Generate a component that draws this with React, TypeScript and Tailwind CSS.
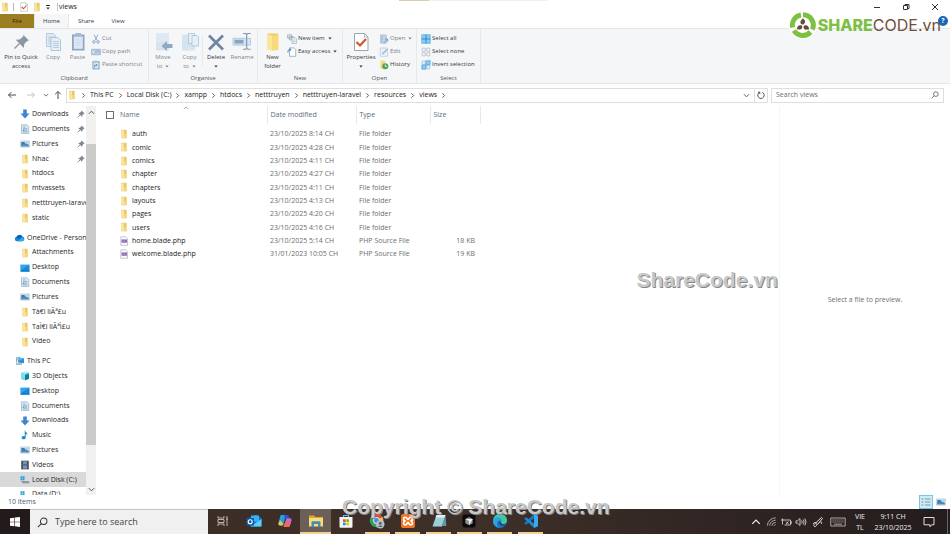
import type { ReactNode } from "react";

/* ---------- small icons ---------- */

type IconProps = { className?: string };

const Folder = ({ className = "h-[10px] w-[10px]" }: IconProps) => (
  <svg viewBox="0 0 10 10" className={className}>
    <path d="M2 .8h5.6v8.4H2z" fill="#e9c767" />
    <path d="M2 1.4l3-.6v8.6l-3-.2z" fill="#f8e3a0" />
    <path d="M5 5h2.9v4.2H5z" fill="#f5d77f" />
  </svg>
);

const BigFolder = () => (
  <svg viewBox="0 0 20 20" className="h-5 w-5">
    <path d="M4.5 1.5h10.5v16H4.5z" fill="#efcb66" />
    <path d="M4.5 2.5l5 1v15.5l-5-2z" fill="#fbe596" />
    <path d="M9.5 4.500l6-2v15l-6 1.500z" fill="#f8da7c" />
  </svg>
);

const Download = () => (
  <svg viewBox="0 0 10 10" className="h-[10px] w-[10px]">
    <path d="M3.2 .5h3.600v4h2.700L5 9.400.500 4.500h2.700z" fill="#3a87d0" />
  </svg>
);

const Doc = () => (
  <svg viewBox="0 0 10 10" className="h-[10px] w-[10px]">
    <path d="M1.500 .8h5.500l1.800 1.800v6.800H1.500z" fill="#dfe9f1" stroke="#8c9dab" strokeWidth=".6" />
    <path d="M3 3h2.600M3 4.700h4.300M5 6.200h2.300M3 7.800h4.300" stroke="#5b9bc4" strokeWidth=".7" />
    <path d="M2.700 5.500h1.800v1.600H2.700z" fill="#53a3d8" />
  </svg>
);

const Picture = () => (
  <svg viewBox="0 0 10 10" className="h-[10px] w-[10px]">
    <path d="M.5 1.900h9v6.300h-9z" fill="#e4eef6" stroke="#a0b4c4" strokeWidth=".5" />
    <path d="M1.100 2.500h7.800v2H1.100z" fill="#a9d4f2" />
    <path d="M1.100 4.300l3-.6 4.800 2v1.900H1.100z" fill="#4c8bb8" />
    <path d="M1.500 3.300h3v1h-3z" fill="#1f5274" />
  </svg>
);

const Desktop = () => (
  <svg viewBox="0 0 10 10" className="h-[10px] w-[10px]">
    <path d="M.6 1.800h8.900v6.700H.6z" fill="#1489d8" />
    <path d="M.6 1.800h8.900L.6 7.500z" fill="#2fa5ee" />
    <path d="M.6 7.600h8.900v1H.6z" fill="#0a6cb0" />
  </svg>
);

const Cloud = () => (
  <svg viewBox="0 0 11 10" className="h-[10px] w-[11px]">
    <path d="M2.900 8.300a2.300 2.300 0 0 1-.4-4.500 3.300 3.300 0 0 1 5.900-.2 2.400 2.400 0 0 1 .2 4.700z" fill="#1584dc" />
    <path d="M2.600 3.800a3.300 3.300 0 0 1 5.800-.3L4 6z" fill="#0b5fae" />
    <path d="M4 8.300l4.400-4a2.200 2.200 0 0 1 .2 4z" fill="#35a9ee" />
  </svg>
);

const Pc = () => (
  <svg viewBox="0 0 11 10" className="h-[10px] w-[11px]">
    <path d="M3.500 1l6.500 1.500v4.700L4 6.500z" fill="#2f8fd2" />
    <path d="M3.500 1l6.500 1.500L4 5z" fill="#62b7e8" />
    <path d="M2 7.300h6v1.400H2zM2 1.500h1v5H2z" fill="#8fa8ba" />
  </svg>
);

const Cube = () => (
  <svg viewBox="0 0 10 10" className="h-[10px] w-[10px]">
    <path d="M1 2l4-1.200L9 2v5.800L5 9.300 1 7.800z" fill="#27b4cd" />
    <path d="M1 2l4 1v6.300L1 7.800z" fill="#7fdde8" />
    <path d="M1 2l4-1.200L9 2 5 3z" fill="#b9f0f4" />
    <path d="M5 4.500L9 3v4.800L5 9.300z" fill="#0d7f9c" />
  </svg>
);

const Music = () => (
  <svg viewBox="0 0 10 10" className="h-[10px] w-[10px]">
    <path d="M5 .6c.4 1.900 3.400 2.300 2 5.400.1-1.600-.7-2.100-1.300-2.300v3.900a2 1.600 0 1 1-1-1.300V.6z" fill="#1f86cc" />
  </svg>
);

const Film = () => (
  <svg viewBox="0 0 10 10" className="h-[10px] w-[10px]">
    <path d="M1.200 .7h7.600v8.600H1.200z" fill="#333d45" />
    <path d="M3 1.200h4v3.400H3zM3 5.300h4v3.500H3z" fill="#6f98b8" />
    <path d="M2 1v8M8 1v8" stroke="#c8d0d6" strokeWidth=".6" strokeDasharray=".8 .8" />
  </svg>
);

const Disk = () => (
  <svg viewBox="0 0 11 10" className="h-[10px] w-[10px]">
    <path d="M.6 .8h2v2h-2zM3 .8h2v2H3zM.6 3.200h2v2h-2zM3 3.200h2v2H3z" fill="#1fa2d8" />
    <path d="M1.500 6.200h7.300l1.500 1v1.600H3z" fill="#a2acb3" />
    <path d="M1.500 6.200L3 7.200h7.300" stroke="#5d6a72" strokeWidth=".6" fill="none" />
  </svg>
);

const Pin = () => (
  <svg viewBox="0 0 8 8" className="h-2 w-2">
    <path d="M4.600 .5l3 3-.9.3-1.400 1.400-.1 1.700L1.200 2.900l1.700-.1 1.400-1.400z" fill="#7b8893" />
    <path d="M3.200 4.800L.7 7.300" stroke="#7b8893" strokeWidth=".9" />
  </svg>
);

const BigPin = () => (
  <svg viewBox="0 0 20 20" className="h-5 w-5">
    <path d="M12.500 3l5.500 5.500-1.800.5-3 3-.3 4-8.200-8.200 4-.4 3.300-3z" fill="#8b98a3" />
    <path d="M8.500 11.500L3.500 16.500" stroke="#8b98a3" strokeWidth="1.500" />
  </svg>
);

const Php = () => (
  <svg viewBox="0 0 10 10" className="h-[10px] w-[10px]">
    <path d="M1.800 .8h4.900l1.800 1.800v6.700H1.800z" fill="#fbfafd" stroke="#a79fb5" strokeWidth=".6" />
    <path d="M2.600 3.500h5.200v3.200H2.600z" fill="#7c55a5" />
    <path d="M3.300 5.800l.8-1.400.8 1.400.8-1.400.8 1.400" stroke="#d8c6ea" strokeWidth=".5" fill="none" />
  </svg>
);

const Pages = () => (
  <svg viewBox="0 0 20 20" className="h-5 w-5">
    <path d="M3.500 1.500h7l2 2v11h-9z" fill="#e0eaf4" stroke="#a9bfd5" strokeWidth=".8" />
    <path d="M5 5h6M5 7h3M5 9h3M5 11h3" stroke="#b5c8db" strokeWidth=".8" />
    <path d="M8 5.500h7l2.500 2.500v10.500H8z" fill="#e6eef7" stroke="#a1b9d1" strokeWidth=".8" />
    <path d="M10 9.500h6M10 11.500h6M10 13.500h6M10 15.500h6" stroke="#a9c0d6" strokeWidth=".8" />
  </svg>
);

const Clipboard = () => (
  <svg viewBox="0 0 20 20" className="h-5 w-5">
    <path d="M4 2.500h12.500v16H4z" fill="#8fa6c2" />
    <path d="M5.800 4.500h9v12.300h-9z" fill="#dce8f5" />
    <path d="M7.500 1h5.500v3.200H7.500z" fill="#a9bacc" />
    <path d="M7 8h6.500M7 10.500h6.500M7 13h6.500" stroke="#c3d5e8" strokeWidth=".8" />
  </svg>
);

const MoveTo = () => (
  <svg viewBox="0 0 20 20" className="h-5 w-5">
    <path d="M3 1.500h13v17H3z" fill="#d6e3f0" />
    <path d="M3 1.500h13v8H3z" fill="#dfe9f4" />
    <path d="M8.500 14l5.500-5v3h5.500v4H14v3z" fill="#91a8c2" />
  </svg>
);

const CopyTo = () => (
  <svg viewBox="0 0 20 20" className="h-5 w-5">
    <path d="M2 2.500h13v16H2z" fill="#d6e3f0" />
    <path d="M8.500 1.500h6v10h-6z" fill="#e6eff8" stroke="#a3bbd3" strokeWidth=".7" />
    <path d="M12 3.500h5l1.500 1.500v9H12z" fill="#e6eff8" stroke="#a3bbd3" strokeWidth=".7" />
  </svg>
);

const DeleteX = () => (
  <svg viewBox="0 0 20 20" className="h-5 w-5">
    <path d="M3 3.500l14 14M17 3.500l-14 14" stroke="#7087a4" strokeWidth="2.800" />
  </svg>
);

const RenameIcon = () => (
  <svg viewBox="0 0 20 20" className="h-5 w-5">
    <path d="M1 6.200h17.500v7H1z" fill="#d5e2f0" stroke="#a9bfd7" strokeWidth=".7" />
    <path d="M2.500 7.800h9v3.800h-9z" fill="#8aa5c4" />
    <path d="M11 1.500h2.500l1.200 1 1.200-1h2.600M11 17.300h2.500l1.200-1 1.200 1h2.600M14.700 2.500v14" stroke="#7e96b3" strokeWidth="1.100" fill="none" />
  </svg>
);

const PropertiesIcon = ({ className = "h-5 w-5" }: IconProps) => (
  <svg viewBox="0 0 20 20" className={className}>
    <path d="M3.500 1.500h10l3.500 3.500v13.500H3.500z" fill="#fff" stroke="#9da5ad" strokeWidth="1" />
    <path d="M13.500 1.500V5H17" fill="none" stroke="#9da5ad" strokeWidth=".8" />
    <path d="M5.500 10l3.500 3.500 6-6.500" fill="none" stroke="#d0562a" strokeWidth="2.200" />
  </svg>
);

const Scissors = () => (
  <svg viewBox="0 0 10 10" className="h-[10px] w-[10px]">
    <path d="M3 .6l3.300 6M7 .6L3.700 6.600" stroke="#8fa3bb" strokeWidth=".9" fill="none" />
    <circle cx="2.900" cy="7.900" r="1.300" fill="none" stroke="#7fa4cf" strokeWidth=".9" />
    <circle cx="7.100" cy="7.900" r="1.300" fill="none" stroke="#7fa4cf" strokeWidth=".9" />
  </svg>
);

const PathIcon = () => (
  <svg viewBox="0 0 10 10" className="h-[10px] w-[10px]">
    <path d="M.5 2.200h9v5.600h-9z" fill="#a9bfd9" stroke="#92abc9" strokeWidth=".5" />
    <path d="M1.500 3.500l1 3 .9-3M4.500 6.500h1M6.500 6.500h1" stroke="#fff" strokeWidth=".7" fill="none" />
  </svg>
);

const ShortcutIcon = () => (
  <svg viewBox="0 0 10 10" className="h-[10px] w-[10px]">
    <path d="M1.400 1.200h7.200v8.200H1.400z" fill="#8ba6c8" />
    <path d="M2.500 2.500h5v5.800h-5z" fill="#e1ebf6" />
    <path d="M3.500 7.500V5.200h2.200M4.800 3.900l1.500 1.300-1.500 1.200" stroke="#5a7fae" strokeWidth=".8" fill="none" />
    <path d="M3.600 .5h2.800v1.500H3.600z" fill="#b7c6d8" />
  </svg>
);

const NewItemIcon = () => (
  <svg viewBox="0 0 10 10" className="h-[10px] w-[10px]">
    <path d="M.6 .8h4v3.200h-4zM2.300 2.600h4v3.200h-4z" fill="#e2edf5" stroke="#79949f" strokeWidth=".6" />
    <path d="M5 3.800h3.200L9.300 5v4.300H5z" fill="#fff" stroke="#7893a8" strokeWidth=".6" />
    <path d="M6 6h2.200M6 7.500h2.200" stroke="#6aa7c8" strokeWidth=".6" />
  </svg>
);

const EasyIcon = () => (
  <svg viewBox="0 0 10 10" className="h-[10px] w-[10px]">
    <path d="M2.500 .9h4.700l1.500 1.500v6.900H2.500z" fill="#fff" stroke="#8a9aa8" strokeWidth=".7" />
    <path d="M1 5.500C.5 3.400 1.700 2.600 3.600 2.600M2.600 1.300L4 2.600 2.600 4" stroke="#2c78b8" strokeWidth=".9" fill="none" />
  </svg>
);

const OpenIcon = () => (
  <svg viewBox="0 0 10 10" className="h-[10px] w-[10px]">
    <path d="M1.500 .9h5.800v8.400H1.500z" fill="#c6d5e5" stroke="#9cb3cc" strokeWidth=".6" />
    <path d="M2.500 2.500h1v1h-1zM2.500 4.600h1v1h-1zM2.500 6.700h1v1h-1z" fill="#6b8fba" />
    <path d="M5 8.700L8.500 5.200M6 5h2.700v2.700" stroke="#7195bf" strokeWidth=".9" fill="none" />
  </svg>
);

const EditIcon = () => (
  <svg viewBox="0 0 10 10" className="h-[10px] w-[10px]">
    <path d="M1.200 1h7.400v8.300H1.200z" fill="#e9f0f8" stroke="#b2c5da" strokeWidth=".6" />
    <path d="M2.800 7.600l.5-1.500L8 1.800l.9.900-4.600 4.400z" fill="#9db6d3" />
  </svg>
);

const HistoryIcon = () => (
  <svg viewBox="0 0 10 10" className="h-[10px] w-[10px]">
    <path d="M1.500 .6h4.600v8.200H1.500z" fill="#f4d77c" />
    <circle cx="6.300" cy="6.300" r="3" fill="#4ba552" />
    <path d="M6.300 4.500v1.900h1.600" stroke="#fff" strokeWidth=".8" fill="none" />
  </svg>
);

const SelectAllIcon = () => (
  <svg viewBox="0 0 10 10" className="h-[10px] w-[10px]">
    <path d="M.7.700h8.600v8.600H.7z" fill="#8acbf3" stroke="#4a9fd8" strokeWidth=".6" />
    <path d="M5 .7v8.600M.7 5h8.600" stroke="#2a86c8" strokeWidth=".9" />
  </svg>
);

const SelectNoneIcon = () => (
  <svg viewBox="0 0 10 10" className="h-[10px] w-[10px]">
    <path d="M1.200 1.200h3v3h-3zM5.800 1.200h3v3h-3zM1.200 5.800h3v3h-3zM5.800 5.800h3v3h-3z" fill="#fff" stroke="#a9b2bb" strokeWidth=".7" />
  </svg>
);

const InvertIcon = () => (
  <svg viewBox="0 0 10 10" className="h-[10px] w-[10px]">
    <path d="M1.200 1.200h3v3h-3zM5.800 5.800h3v3h-3z" fill="#fff" stroke="#7fb0d8" strokeWidth=".7" />
    <path d="M4.900.7h4.300v4.200H4.900zM.8 5h4.200v4.200H.8z" fill="#8acbf3" stroke="#3f98d4" strokeWidth=".6" />
  </svg>
);

const Chevron = ({ d, className = "h-[7px] w-[7px]" }: { d: "up" | "down" | "right"; className?: string }) => (
  <svg viewBox="0 0 8 8" className={className} fill="none" stroke="currentColor" strokeWidth="1">
    <path d={d === "up" ? "M1 5.500l3-3 3 3" : d === "down" ? "M1 2.500l3 3 3-3" : "M2.800 1.500l2.500 2.500-2.500 2.500"} />
  </svg>
);

const Arrow = ({ className = "" }: IconProps) => (
  <svg viewBox="0 0 10 10" className={`h-[10px] w-[10px] ${className}`} fill="none" stroke="currentColor" strokeWidth="1">
    <path d="M9 5H1.500M4.300 2.200L1.500 5l2.800 2.800" />
  </svg>
);

const Caret = () => (
  <svg viewBox="0 0 4 3" className="h-[3px] w-1" fill="currentColor">
    <path d="M.3 .4h3.400L2 2.400z" />
  </svg>
);

const Magnifier = ({ className = "h-2 w-2" }: IconProps) => (
  <svg viewBox="0 0 12 12" className={className} fill="none" stroke="currentColor" strokeWidth="1.100">
    <circle cx="7.300" cy="4.700" r="3.500" />
    <path d="M4.800 7.200L1 11" />
  </svg>
);

/* ---------- ribbon ---------- */

const Big = ({ icon, label, second, caret, dim, width }: { icon: ReactNode; label: string; second?: string; caret?: boolean; dim?: boolean; width: string }) => (
  <button type="button" className={`flex flex-none flex-col items-center ${width} ${dim ? "text-[#82878e]" : "text-[#34383c]"}`}>
    {icon}
    <span className="mt-px leading-[9px] whitespace-nowrap">{label}</span>
    <span className="flex h-2 items-center gap-[3px] leading-2">
      {second}
      {caret && <Caret />}
    </span>
  </button>
);

const Small = ({ icon, label, caret, dim }: { icon: ReactNode; label: string; caret?: boolean; dim?: boolean }) => (
  <button type="button" className={`flex h-[13px] items-center gap-px whitespace-nowrap ${dim ? "text-[#7b8189]" : "text-[#34383c]"}`}>
    {icon}
    <span>{label}</span>
    {caret && <span className="ml-0.5"><Caret /></span>}
  </button>
);

const Group = ({ title, width, children }: { title: string; width: string; children: ReactNode }) => (
  <section aria-label={title} className={`flex flex-none flex-col justify-between border-r border-[#e6e8ea] ${width}`}>
    <div className="flex pt-[3px]">{children}</div>
    <div className="text-center leading-[10px] text-[#50555b]">{title}</div>
  </section>
);

const Ribbon = () => (
  <div className="flex h-[56px] flex-none border-y border-[#e4e6e9] bg-[#f5f6f7] text-[6px]">
    <Group title="Clipboard" width="w-[149px]">
      <Big icon={<BigPin />} label="Pin to Quick" second="access" width="w-[42px]" />
      <Big icon={<Pages />} label="Copy" dim width="w-[22px]" />
      <Big icon={<Clipboard />} label="Paste" dim width="w-[27px]" />
      <div>
        <Small icon={<Scissors />} label="Cut" dim />
        <Small icon={<PathIcon />} label="Copy path" dim />
        <Small icon={<ShortcutIcon />} label="Paste shortcut" dim />
      </div>
    </Group>
    <Group title="Organise" width="w-[109px]">
      <Big icon={<MoveTo />} label="Move" second="to" caret dim width="w-[28px]" />
      <Big icon={<CopyTo />} label="Copy" second="to" caret dim width="w-[25px]" />
      <div className="my-1 border-l border-[#e6e8ea]" />
      <Big icon={<DeleteX />} label="Delete" caret width="w-[26px]" />
      <Big icon={<RenameIcon />} label="Rename" dim width="w-[26px]" />
    </Group>
    <Group title="New" width="w-[85px]">
      <Big icon={<BigFolder />} label="New" second="folder" width="w-[29px]" />
      <div>
        <Small icon={<NewItemIcon />} label="New item" caret />
        <Small icon={<EasyIcon />} label="Easy access" caret />
      </div>
    </Group>
    <Group title="Open" width="w-[74px]">
      <Big icon={<PropertiesIcon />} label="Properties" caret width="w-[36px]" />
      <div>
        <Small icon={<OpenIcon />} label="Open" caret dim />
        <Small icon={<EditIcon />} label="Edit" dim />
        <Small icon={<HistoryIcon />} label="History" />
      </div>
    </Group>
    <Group title="Select" width="w-[64px]">
      <div className="pl-1">
        <Small icon={<SelectAllIcon />} label="Select all" />
        <Small icon={<SelectNoneIcon />} label="Select none" />
        <Small icon={<InvertIcon />} label="Invert selection" />
      </div>
    </Group>
  </div>
);

/* ---------- title bar and tabs ---------- */

const Header = () => (
  <header className="flex-none">
    <div className="flex h-[14px] items-center">
      <Folder />
      <span className="ml-[3px] h-2 border-l border-[#b5b5b5]" />
      <button type="button" aria-label="Properties" className="ml-[5px]"><PropertiesIcon className="h-[10px] w-[10px]" /></button>
      <button type="button" aria-label="New folder" className="ml-[3px]"><Folder /></button>
      <button type="button" aria-label="Customise toolbar" className="mr-[7px] ml-1 flex flex-col items-center gap-px text-[#333]">
        <span className="w-1 border-t border-current" />
        <Caret />
      </button>
      <span className="mr-px h-2 border-l border-[#c5c5c5]" />
      <h1 className="text-[7px] text-[#222]">views</h1>
      <div className="mb-auto ml-[322px] h-px w-[30px] bg-[#d9cfa4]" />
      <div className="mb-auto h-px w-[118px] bg-[#efefef]" />
      <div className="ml-auto flex items-center text-[#333]">
        <button type="button" aria-label="Minimise" className="flex w-[29px] justify-center">
          <svg viewBox="0 0 8 8" className="h-2 w-2" stroke="currentColor"><path d="M1 4.500h6" /></svg>
        </button>
        <button type="button" aria-label="Restore" className="flex w-[29px] justify-center">
          <svg viewBox="0 0 8 8" className="h-2 w-2" fill="none" stroke="currentColor"><path d="M1.500 2.500h4v4h-4zM3 2.500v-1h4v4H5.500" /></svg>
        </button>
        <button type="button" aria-label="Close" className="flex w-[30px] justify-center">
          <svg viewBox="0 0 8 8" className="h-2 w-2" stroke="currentColor"><path d="M1 1l6 6M7 1L1 7" /></svg>
        </button>
      </div>
    </div>
    <nav aria-label="Ribbon tabs" className="flex h-[14px] text-[6px] text-[#34383c]">
      <button type="button" className="w-[34px] bg-[#9a7e20] text-[#2c2408]">File</button>
      <button type="button" className="-mb-px w-[35px] border-x border-[#e4e6e9] bg-[#f5f6f7]">Home</button>
      <button type="button" className="w-[34px]">Share</button>
      <button type="button" className="w-[30px]">View</button>
    </nav>
  </header>
);

const Logo = () => (
  <div className="absolute top-[11px] right-[9px] flex items-center">
    <svg viewBox="0 0 28 28" className="mr-px h-[28px] w-[28px]">
      <circle cx="14" cy="14" r="14" fill="#fff" />
      <g fill="none" stroke="#7cc142" strokeWidth="5">
        <path d="M3.600 16.500A10.300 10.300 0 0 1 12 4" />
        <path d="M14 3.800A10.300 10.300 0 0 1 23.300 18.500" />
        <path d="M21.500 21A10.300 10.300 0 0 1 5 19.500" />
      </g>
      <g fill="#6a4a35">
        <path d="M13.500 7.500c2.900 1 3.300 3.600 1.300 5.700-2.100 1-3.900-.4-3.300-2.900z" />
        <path d="M7.800 18.300c.3-3.100 2.400-4.900 5-3.700 1.200 2-.1 4-2.200 4z" />
        <path d="M20.200 18.300c-.4-3-2.300-4.700-4.900-3.800-1.500 1.600-.5 3.900 1.600 4.300z" />
      </g>
    </svg>
    <div className="font-['Inter','Noto_Sans',sans-serif] text-[16px] leading-[20px]">
      <span className="font-extrabold text-[#7cc142]">SHARE</span>
      <span className="text-[#6f4f3b]">CODE.vn</span>
    </div>
  </div>
);

/* ---------- address row ---------- */

const crumbs = ["This PC", "Local Disk (C:)", "xampp", "htdocs", "netttruyen", "netttruyen-laravel", "resources", "views"];

const AddressRow = () => (
  <div className="flex h-[22px] flex-none items-center text-[#4a4a4a]">
    <div className="flex w-[66px] items-center pl-[7px]">
      <button type="button" aria-label="Back"><Arrow /></button>
      <button type="button" aria-label="Forward" className="ml-[9px] text-[#c4c4c4]"><Arrow className="rotate-180" /></button>
      <button type="button" aria-label="Recent locations" className="ml-[7px]"><Chevron d="down" className="h-[6px] w-[6px]" /></button>
      <button type="button" aria-label="Up" className="ml-1"><Arrow className="rotate-90" /></button>
    </div>
    <div className="flex h-[15px] flex-1 items-center border border-[#dedede] bg-white">
      <Folder />
      <nav aria-label="Path" className="ml-[3px] flex items-center">
        <Chevron d="right" />
        {crumbs.map((c) => (
          <span key={c} className="flex items-center">
            <a href="#" className="mx-[3px] text-[#222]">{c}</a>
            <Chevron d="right" />
          </span>
        ))}
      </nav>
      <button type="button" aria-label="Previous locations" className="ml-auto px-1"><Chevron d="down" /></button>
      <button type="button" aria-label="Refresh" className="flex h-full items-center border-l border-[#e2e2e2] px-0.5">
        <svg viewBox="0 0 10 10" className="h-2 w-2" fill="none" stroke="currentColor" strokeWidth="1.200">
          <path d="M6.500 1.600a4 4 0 1 1-3.500.2M1.200 1.500h2.300v2.400" />
        </svg>
      </button>
    </div>
    <label className="mr-[6px] ml-[3px] flex h-[15px] w-[173px] items-center border border-[#dedede] px-1">
      <input type="search" aria-label="Search views" placeholder="Search views" className="min-w-0 flex-1 outline-none placeholder:text-[#6e6e6e]" />
      <Magnifier />
    </label>
  </div>
);

/* ---------- sidebar ---------- */

type Item = { label: string; icon: ReactNode; root?: boolean; pinned?: boolean; active?: boolean };

const sections: Item[][] = [
  [
    { label: "Downloads", icon: <Download />, pinned: true },
    { label: "Documents", icon: <Doc />, pinned: true },
    { label: "Pictures", icon: <Picture />, pinned: true },
    { label: "Nhac", icon: <Folder />, pinned: true },
    { label: "htdocs", icon: <Folder /> },
    { label: "mtvassets", icon: <Folder /> },
    { label: "netttruyen-laravel", icon: <Folder /> },
    { label: "static", icon: <Folder /> },
  ],
  [
    { label: "OneDrive - Personal", icon: <Cloud />, root: true },
    { label: "Attachments", icon: <Folder /> },
    { label: "Desktop", icon: <Desktop /> },
    { label: "Documents", icon: <Doc /> },
    { label: "Pictures", icon: <Picture /> },
    { label: "Tà€i liÃª£u", icon: <Folder /> },
    { label: "TaÌ€i liÃªÌ£u", icon: <Folder /> },
    { label: "Video", icon: <Folder /> },
  ],
  [
    { label: "This PC", icon: <Pc />, root: true },
    { label: "3D Objects", icon: <Cube /> },
    { label: "Desktop", icon: <Desktop /> },
    { label: "Documents", icon: <Doc /> },
    { label: "Downloads", icon: <Download /> },
    { label: "Music", icon: <Music /> },
    { label: "Pictures", icon: <Picture /> },
    { label: "Videos", icon: <Film /> },
    { label: "Local Disk (C:)", icon: <Disk />, active: true },
    { label: "Data (D:)", icon: <Disk /> },
  ],
];

const Sidebar = () => (
  <aside className="flex w-[96px] flex-none">
    <nav aria-label="Folders" className="min-w-0 flex-1 overflow-hidden text-[#262626]">
      <div className="flex h-[396px] flex-col pt-px">
        {sections.map((items, s) => (
          <ul key={s} className={`flex flex-col ${s === 2 ? "flex-[10]" : "mb-[5px] flex-[8]"}`}>
            {items.map((it) => (
              <li key={it.label} className="min-h-0 flex-1">
                <a
                  href="#"
                  className={`flex h-full items-center gap-0.5 whitespace-nowrap ${it.root ? "pl-[14px]" : "pl-5"} ${it.active ? "bg-[#d9d9d9]" : ""}`}
                >
                  <span className="flex-none">{it.icon}</span>
                  <span>{it.label}</span>
                  {it.pinned && <span className="mr-px ml-auto"><Pin /></span>}
                </a>
              </li>
            ))}
          </ul>
        ))}
      </div>
    </nav>
    <div className="flex w-[10px] flex-none flex-col items-center bg-[#f0f0f0] text-[#404040]">
      <button type="button" aria-label="Scroll up" className="flex h-3 items-center"><Chevron d="up" /></button>
      <div className="h-[26px]" />
      <div className="w-full flex-1 bg-[#cbcbcb]" />
      <div className="h-[38px]" />
      <button type="button" aria-label="Scroll down" className="flex h-3 items-center"><Chevron d="down" /></button>
    </div>
  </aside>
);

/* ---------- file list ---------- */

const files = [
  ["auth", "23/10/2025 8:14 CH"],
  ["comic", "23/10/2025 4:28 CH"],
  ["comics", "23/10/2025 4:11 CH"],
  ["chapter", "23/10/2025 4:27 CH"],
  ["chapters", "23/10/2025 4:11 CH"],
  ["layouts", "23/10/2025 4:13 CH"],
  ["pages", "23/10/2025 4:20 CH"],
  ["users", "23/10/2025 4:16 CH"],
  ["home.blade.php", "23/10/2025 5:14 CH", "18 KB"],
  ["welcome.blade.php", "31/01/2023 10:05 CH", "19 KB"],
];

const FileList = () => (
  <main className="flex-1">
    <table className="ml-2 w-[376px] table-fixed border-collapse text-left">
      <colgroup>
        <col className="w-[163px]" />
        <col className="w-[89px]" />
        <col className="w-[74px]" />
        <col className="w-[50px]" />
      </colgroup>
      <thead className="text-[#5b6b80]">
        <tr className="h-[18px]">
          <th className="border-r border-[#e8e8e8] p-0 font-normal">
            <div className="relative flex items-center pl-0.5">
              <input type="checkbox" aria-label="Select all files" className="h-2 w-2 appearance-none border border-[#6e6e6e] bg-white" />
              <span className="ml-[6px]">Name</span>
              <span className="absolute -top-[5px] left-[79px] text-[#8a8a8a]"><Chevron d="up" className="h-[6px] w-[6px]" /></span>
            </div>
          </th>
          <th className="border-r border-[#e8e8e8] p-0 pl-[3px] font-normal">Date modified</th>
          <th className="border-r border-[#e8e8e8] p-0 pl-[3px] font-normal">Type</th>
          <th className="border-r border-[#e8e8e8] p-0 pl-[3px] font-normal">Size</th>
        </tr>
      </thead>
      <tbody className="text-[#6d6d6d]">
        <tr aria-hidden="true" className="h-[3px]"><td colSpan={4} className="p-0" /></tr>
        {files.map(([name, date, size], i) => (
          <tr key={name} className={i % 3 === 1 ? "h-[14px]" : "h-[13px]"}>
            <td className="p-0 leading-[13px]">
              <a href="#" className="flex items-center gap-[3px] pl-[15px] text-[#222]">
                {size ? <Php /> : <Folder />}
                {name}
              </a>
            </td>
            <td className="p-0 pl-[3px] leading-[13px]">{date}</td>
            <td className="p-0 pl-[3px] leading-[13px]">{size ? "PHP Source File" : "File folder"}</td>
            <td className="p-0 pr-[5px] text-right leading-[13px]">{size}</td>
          </tr>
        ))}
      </tbody>
    </table>
  </main>
);

/* ---------- taskbar ---------- */

const TaskIcon = ({ children }: { children: ReactNode }) => (
  <svg viewBox="0 0 16 16" className="h-4 w-4">{children}</svg>
);

const apps: { name: string; open?: boolean; active?: boolean; icon: ReactNode }[] = [
  {
    name: "Task view",
    icon: <path d="M3 3v2h6V3M3 13v-2h6v2M3 6.500h6v3H3zM12 3v10M11 6h2" fill="none" stroke="#c9c4c1" strokeWidth=".9" />,
  },
  {
    name: "Outlook",
    icon: (
      <>
        <path d="M3 5l7-3.500L15.500 5v8.500H4z" fill="#1b6fc4" />
        <path d="M5 2.500h8v6H5z" fill="#35b1f2" />
        <path d="M15.500 6v7.500H4.500z" fill="#5ad0fa" />
        <path d="M.5 5h7.500v7.500H.5z" fill="#0b5cab" />
        <circle cx="4.200" cy="8.700" r="2" fill="none" stroke="#fff" strokeWidth="1.100" />
      </>
    ),
  },
  {
    name: "Copilot",
    icon: (
      <>
        <path d="M4 2h5l-2.500 9c-.4 1.200-1 1.600-2 1.600H3C1.500 12.500 1 11 1.600 9.500L3 4c.2-1.200.5-2 1-2z" fill="#249ee0" />
        <path d="M7.500 2h2.700c1.100 0 1.500.8 1.800 2l.4 1.500H9.500c-1 0-1.500.5-1.800 1.500z" fill="#2956cf" />
        <path d="M1.400 10.500L3 7l3.500 4c-.4 1.200-1 1.600-2 1.600H3c-1 0-1.500-.9-1.600-2.100z" fill="#e7c43d" />
        <path d="M9.500 5.200h3.400c1.600 0 2 1.300 1.500 2.800L13 12.200c-.4 1.200-1 1.800-2 1.800H6.500z" fill="#cf63cf" />
        <path d="M8 9.500h5.700l-.7 2.700c-.4 1.200-1 1.800-2 1.800H6.500z" fill="#f36b57" />
      </>
    ),
  },
  {
    name: "File Explorer",
    open: true,
    active: true,
    icon: (
      <>
        <path d="M1 2.500h5l1.300 1.500H15v9H1z" fill="#e0a92e" />
        <path d="M1 5h14v8.500H1z" fill="#fcd979" />
        <path d="M3.500 14V9.300c0-.7.3-1 1-1h7c.7 0 1 .3 1 1V14H10v-3H6v3z" fill="#3f8fb8" />
      </>
    ),
  },
  {
    name: "Microsoft Store",
    icon: (
      <>
        <path d="M5.500 4V2.500h5V4" fill="none" stroke="#5abaf0" strokeWidth="1.100" />
        <path d="M1.500 4h13v9.500c0 .8-.5 1.300-1.300 1.300H2.800c-.8 0-1.300-.5-1.300-1.300z" fill="#f3f3f3" />
        <path d="M5 6.300h2.700V9H5z" fill="#f25022" />
        <path d="M8.300 6.300H11V9H8.300z" fill="#7fba00" />
        <path d="M5 9.600h2.700v2.700H5z" fill="#00a4ef" />
        <path d="M8.300 9.600H11v2.700H8.300z" fill="#ffb900" />
      </>
    ),
  },
  {
    name: "Chrome",
    open: true,
    icon: (
      <>
        <circle cx="7.500" cy="7.500" r="6.800" fill="#35a353" />
        <path d="M7.500 7.500L1.600 4.100A6.800 6.800 0 0 1 13.400 4.100z" fill="#e5453a" />
        <path d="M7.500 7.500L13.400 4.100a6.800 6.800 0 0 1-5.900 10.200z" fill="#fac42d" />
        <circle cx="7.500" cy="7.500" r="3.100" fill="#4a8bf1" stroke="#fff" strokeWidth=".9" />
        <circle cx="11.300" cy="11.200" r="4.200" fill="#b8c1c8" />
        <circle cx="11.300" cy="10.200" r="1.500" fill="#5b6770" />
        <path d="M9 14c.3-2 4.300-2 4.600 0z" fill="#5b6770" />
      </>
    ),
  },
  {
    name: "XAMPP",
    open: true,
    icon: (
      <>
        <rect x="1" y="1" width="14" height="14" rx="2" fill="#f37623" />
        <path d="M5.700 8C3 8 3 4.200 5.200 4.200S7 6.500 8 6.500s.6-2.300 2.800-2.300S13 8 10.300 8c2.700 0 2.700 3.800.5 3.800S9 9.500 8 9.500s-.6 2.300-2.800 2.300S3 8 5.700 8z" fill="none" stroke="#fff" strokeWidth="1.600" />
      </>
    ),
  },
  {
    name: "Notepad",
    open: true,
    icon: (
      <>
        <path d="M5.500 2h9L11 13.500H1.500z" fill="#9bd0da" />
        <path d="M5.500 2h9l-.8 2.500H4.600z" fill="#dceff2" />
        <path d="M14.500 2l.8 11H11z" fill="#5e99a8" />
      </>
    ),
  },
  {
    name: "Cursor",
    open: true,
    icon: (
      <>
        <rect x="1.500" y="1.500" width="13" height="13" rx="2.500" fill="#0b0b0b" />
        <path d="M8 4l3.700 2v4.200L8 12.200l-3.700-2V6z" fill="#8f8f8f" />
        <path d="M4.300 6h7.400L8 12.200V8.100z" fill="#f0f0f0" />
      </>
    ),
  },
  {
    name: "Edge",
    open: true,
    icon: (
      <>
        <circle cx="8" cy="8" r="7" fill="#1476ca" />
        <path d="M1 8a7 7 0 0 1 14-.5c0 2.300-1.700 3.500-3.800 3.500-1.800 0-2.400-.8-2-1.700C10 7 8 5.500 5.800 5.700 3 6 1.500 7 1 8z" fill="#44c8a1" />
        <path d="M1 8c.5-3 3.600-4.400 6.300-3.600 2.200.7 3.300 2.800 1.900 4.900C9.200 7.600 7.500 7 6 8.200c-1.800 1.500-.8 5 1.500 6.700A7 7 0 0 1 1 8z" fill="#2ba3df" />
        <path d="M8 9c-.3 2 1.700 3.500 5.500 2.800" stroke="#3b2e28" strokeWidth="1.200" fill="none" />
      </>
    ),
  },
  {
    name: "Visual Studio Code",
    open: true,
    icon: (
      <>
        <path d="M11 1l4 1.800v10.400L11 15z" fill="#3ba9ef" />
        <path d="M11 1v4.300L3.200 11.700 1.300 10.300z" fill="#1279bd" />
        <path d="M11 15v-4.300L3.200 4.300 1.300 5.700z" fill="#1a8ad2" />
      </>
    ),
  },
];

const Taskbar = () => (
  <footer className="flex h-[25px] flex-none bg-linear-to-r from-[#3b2c25] via-[#3e3029] to-[#241c1d] text-[#efefef]">
    <button type="button" aria-label="Start" className="flex w-[30px] flex-none items-center justify-center bg-[#231a1b]">
      <svg viewBox="0 0 10 10" className="h-[10px] w-[10px]" fill="#fff">
        <path d="M0 1.300l4.300-.6v4H0zM4.900.6L10 0v4.700H4.900zM0 5.300h4.300v4L0 8.700zM4.900 5.300H10V10l-5.100-.7z" />
      </svg>
    </button>
    <label className="flex w-[178px] flex-none items-center gap-[7px] border-t border-[#c4c4c4] bg-[#f0f0f0] pl-[7px] text-[#333]">
      <Magnifier className="h-[11px] w-[11px]" />
      <input type="text" aria-label="Type here to search" placeholder="Type here to search" className="w-[120px] bg-transparent text-[9px] outline-none placeholder:text-[#444]" />
    </label>
    <div className="flex w-[338px] flex-none">
      {apps.map((a) => (
        <button
          key={a.name}
          type="button"
          aria-label={a.name}
          className={`flex flex-1 flex-col items-center pt-1 ${a.active ? "bg-[#6c5f58]" : ""}`}
        >
          <TaskIcon>{a.icon}</TaskIcon>
          {a.open && <span className={`mt-auto h-0.5 bg-[#f6cf95] ${a.active ? "w-full" : "w-[25px]"}`} />}
        </button>
      ))}
    </div>
    <div className="ml-auto flex items-center">
      <button type="button" aria-label="Hidden icons" className="mr-[5px]"><Chevron d="up" className="h-[10px] w-[10px]" /></button>
      <svg viewBox="0 0 12 12" className="mr-[3px] h-[11px] w-[11px]" fill="none" stroke="#bcb5b3" strokeWidth="1">
        <path d="M1.500 10.500a9 9 0 0 1 9-8.500M4 10.500a6.500 6.500 0 0 1 6.500-6M6.500 10.500a4 4 0 0 1 4-3.500M9 10.500a1.500 1.500 0 0 1 1.500-1" />
      </svg>
      <svg viewBox="0 0 12 10" className="mr-[3px] h-[10px] w-3" fill="none" stroke="#d0cac8" strokeWidth=".9">
        <path d="M3.500 3h7v5h-6M11.500 4.500v2M1 3h3M2.500 1.500v6M6 4.500l2.500 2.500M8.500 4.500L6 7" />
      </svg>
      <svg viewBox="0 0 12 10" className="mr-[5px] h-[10px] w-3" fill="none" stroke="#d8d3d1" strokeWidth=".9">
        <path d="M1 3.800h1.500L5 1.500v7L2.500 6.200H1zM6.700 3.500q1 1.500 0 3M8.300 2.500q1.700 2.500 0 5M9.900 1.500q2.300 3.500 0 7" />
      </svg>
      <svg viewBox="0 0 12 12" className="mr-[6px] h-3 w-3" fill="none" stroke="#e2dedd" strokeWidth="1">
        <path d="M1 8c2-3 5-1 3.500 1.500S.500 10 3 7.500L9.500 1.500l1 1-5 6" />
        <path d="M7.500 6.500c2-1.500 3 .5 1.500 1.500" />
      </svg>
      <svg viewBox="0 0 16 10" className="mr-[7px] h-[10px] w-4" fill="none" stroke="#cfc9c7" strokeWidth=".8">
        <path d="M.8 1h14.400v8H.8z" />
        <path d="M2.500 3h11M2.500 5h11" strokeDasharray="1.200 .8" />
        <path d="M4 7.200h8" />
      </svg>
      <div className="w-[14px] text-center leading-[11px]">
        <div>VIE</div>
        <div>TL</div>
      </div>
      <div className="w-[52px] text-center leading-[11px]">
        <div>9:11 CH</div>
        <div>23/10/2025</div>
      </div>
      <button type="button" aria-label="Notifications" className="mr-3 ml-1">
        <svg viewBox="0 0 12 12" className="h-3 w-3" fill="none" stroke="#e2dedd" strokeWidth="1">
          <path d="M1 1.500h10v7.300H8.500L7 10.800V8.800H1z" />
        </svg>
      </button>
      <span className="mr-0.5 h-[25px] border-l border-[#6b6464]" />
    </div>
  </footer>
);

const watermark =
  "pointer-events-none absolute font-['Liberation_Sans',Arial,sans-serif] text-[21px] leading-6 font-bold whitespace-nowrap text-[#c8c8c8] [text-shadow:1px_1px_0_#868686]";

export default function App() {
  return (
    <div className="relative flex h-screen flex-col overflow-hidden bg-white font-['Open_Sans','Noto_Sans',sans-serif] text-[7px]">
      <Header />
      <Ribbon />
      <AddressRow />
      <div className="flex min-h-0 flex-1">
        <Sidebar />
        <FileList />
        <section aria-label="Preview" className="flex w-[171px] flex-none items-center justify-center border-l border-[#f5f5f5] text-[#6d6d6d]">
          Select a file to preview.
        </section>
      </div>
      <div className="flex h-[14px] flex-none items-center pl-2 text-[#4a5a78]">
        <span>10 items</span>
        <button type="button" aria-label="Details view" className="ml-auto flex h-[14px] w-[14px] items-center justify-center border border-[#7cc4e4] bg-[#cdeaf7]">
          <svg viewBox="0 0 10 10" className="h-[10px] w-[10px]" stroke="#7590a0" strokeWidth=".9">
            <path d="M.5 2h2M.5 5h2M.5 8h2M4 2h5.500M4 5h5.500M4 8h5.500" />
          </svg>
        </button>
        <button type="button" aria-label="Thumbnail view" className="mr-1 ml-[3px]"><Picture /></button>
      </div>
      <Taskbar />
      <Logo />
      <button type="button" aria-label="Help" className="absolute top-4 right-[2px] flex h-[10px] w-[10px] items-center justify-center rounded-full bg-[#1a66b3] font-bold text-white">
        ?
      </button>
      <div className={`${watermark} top-[268px] left-[67%]`}>ShareCode.vn</div>
      <div className={`${watermark} bottom-[15px] left-[36%]`}>Copyright © ShareCode.vn</div>
    </div>
  );
}
